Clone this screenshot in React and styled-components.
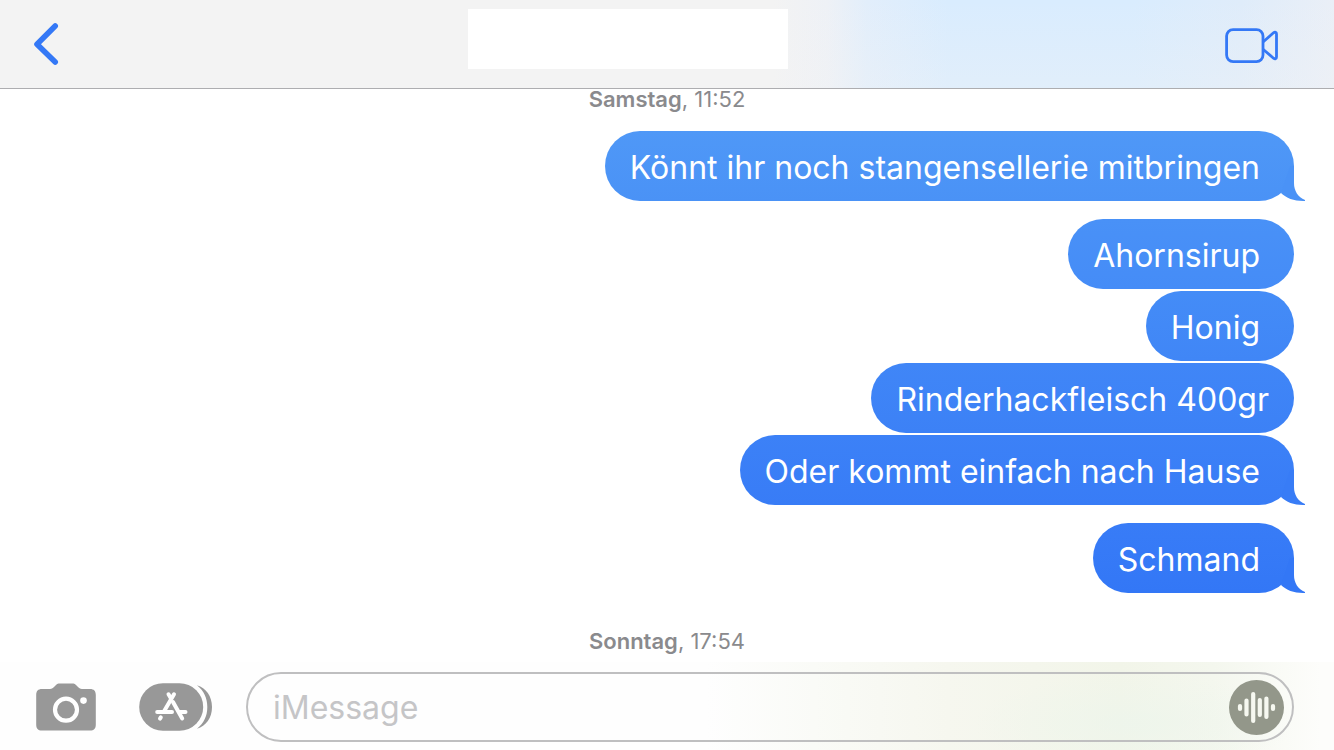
import React from "react";
import styled, { createGlobalStyle } from "styled-components";

const GlobalStyle = createGlobalStyle`
  * { box-sizing: border-box; }
  body { margin: 0; background: #fff; font-family: Inter, "Liberation Sans", sans-serif; }
  button { border: 0; padding: 0; background: none; display: flex; cursor: pointer; font: inherit; }
  svg { display: block; }
`;

const Screen = styled.div`
  min-height: 100vh;
  display: flex;
  flex-direction: column;
`;

const Header = styled.header`
  display: grid;
  grid-template-columns: 1fr auto 1fr;
  align-items: center;
  height: 89px;
  padding: 0 55px 0 32px;
  border-bottom: 1px solid #adadb0;
  background:
    linear-gradient(to bottom, rgba(243, 243, 243, 0) 0%, rgba(243, 243, 243, 0.3) 100%),
    linear-gradient(to right, #f3f3f3 0%, #f3f3f3 58%, #eef1f6 62%, #e2eefb 65%, #d9ecfe 71%, #d9ecfe 85%, #dfecfa 93%, #eaeff7 100%);
`;

const ContactName = styled.div`
  width: 320px;
  height: 60px;
  margin: 0 56px 10px 0;
  background: #fff;
`;

const CallButton = styled.button`
  justify-self: end;
`;

const Thread = styled.main`
  flex: 1;
  display: flex;
  flex-direction: column;
  padding: 0 40px;
`;

const Stamp = styled.time`
  align-self: center;
  font-size: 22px;
  line-height: 20px;
  color: #8a8a8d;
  margin-top: ${(p) => (p.$spaced ? 38 : 0)}px;
  b { font-weight: 600; }
`;

const Messages = styled.ul`
  display: flex;
  flex-direction: column;
  align-items: flex-end;
  list-style: none;
  margin: 22px 0 0;
  padding: 0;
`;

const Bubble = styled.li`
  position: relative;
  height: 70px;
  padding: 0 25px;
  margin-bottom: ${(p) => (p.$last ? 18 : 2)}px;
  border-radius: 35px;
  background: linear-gradient(${(p) => p.$from}, ${(p) => p.$to});
  color: #fff;
  font-size: 32px;
  line-height: 74px;
  white-space: pre;
  &:last-child { margin-bottom: 0; }
`;

const TailShape = styled.svg`
  position: absolute;
  right: -12px;
  bottom: 0;
`;

const Composer = styled.form`
  display: flex;
  align-items: center;
  height: 88px;
  padding: 2px 40px 0 36px;
  background:
    radial-gradient(ellipse 160px 50px at 85% 70%, rgba(236, 245, 236, 0.7), rgba(236, 245, 236, 0)),
    linear-gradient(to right, #fefefe 0%, #fefefe 53%, #fafbf7 61%, #f6f7ef 71%, #f2f5e9 84%, #f4f7ee 91%, #fdfdfb 99%);
`;

const AppsButton = styled.button`
  margin: 0 34px 0 43px;
`;

const Field = styled.div`
  flex: 1;
  display: flex;
  align-items: center;
  height: 70px;
  padding: 0 8px 0 25px;
  border: 2px solid #bfbfc0;
  border-radius: 35px;
`;

const TextInput = styled.input`
  flex: 1;
  min-width: 0;
  height: 60px;
  padding: 0;
  border: 0;
  outline: 0;
  background: none;
  font: inherit;
  font-size: 32px;
  color: #111;
  &::placeholder { color: #c5c5c7; opacity: 1; }
`;

const messages = [
  { text: "Könnt ihr noch stangensellerie mitbringen ", from: "#4f98f7", to: "#4a92f6", tail: true },
  { text: "Ahornsirup ", from: "#4991f7", to: "#458cf7" },
  { text: "Honig ", from: "#448cf7", to: "#4086f6" },
  { text: "Rinderhackfleisch 400gr", from: "#4086f7", to: "#3c81f6" },
  { text: "Oder kommt einfach nach Hause ", from: "#3c81f7", to: "#387cf6", tail: true },
  { text: "Schmand ", from: "#387cf7", to: "#3377f6", tail: true },
];

function Tail({ color }) {
  return (
    <TailShape width="36" height="36" viewBox="0 0 36 36" aria-hidden="true">
      <path d="M20 1H24V18C24 26 28 32 35 35V36H33C24 36 16 33 11 28Z" fill={color} />
    </TailShape>
  );
}

function BackIcon() {
  return (
    <svg width="30" height="46" viewBox="0 0 30 46" fill="none" stroke="#3478f6" strokeWidth="5.6" strokeLinecap="round" strokeLinejoin="round">
      <path d="M23.2 5L5 23.2L23.2 41" />
    </svg>
  );
}

function VideoIcon() {
  return (
    <svg width="54" height="40" viewBox="0 -4 54 40" fill="none" stroke="#3478f6" strokeWidth="2.8" strokeLinejoin="round">
      <rect x="1.6" y="1.6" width="36.4" height="32" rx="6.5" />
      <path d="M38 14L48.5 4.8C50 3.6 51.5 4.1 51.5 6V29C51.5 31 50 31.4 48.5 30.2L38 21.2" />
    </svg>
  );
}

function CameraIcon() {
  return (
    <svg width="60" height="48" viewBox="0 0 60 48">
      <path d="M6 6H14C16 6 17 5 18.5 3.5L20 2C21.3 .8 22 .4 24 .4H36C38 .4 38.7 .8 40 2L41.5 3.5C43 5 44 6 46 6H54C58 6 59.8 8 59.8 12V41.5C59.8 45.5 58 47.5 54 47.5H6C2 47.5 .2 45.5 .2 41.5V12C.2 8 2 6 6 6Z" fill="#989898" />
      <circle cx="30" cy="26.7" r="11" fill="none" stroke="#fff" strokeWidth="4.2" />
      <circle cx="47.5" cy="17.6" r="3.3" fill="#fff" />
    </svg>
  );
}

function AppsIcon() {
  return (
    <svg width="73" height="48" viewBox="0 0 73 48">
      <path d="M58 2.2C67 5 73 13 73 24C73 35 67 43 58 45.8C65 40 68.3 33 68.3 24C68.3 15 65 8 58 2.2Z" fill="#989898" />
      <rect x=".2" y=".2" width="64" height="47.5" rx="23.7" fill="#989898" />
      <g stroke="#fff" strokeWidth="4" strokeLinecap="round" fill="none">
        <path d="M35 11.3L24.8 28.8" />
        <path d="M29.5 11.3L32 15.5" />
        <path d="M34 19L43.2 35.5" />
        <path d="M18.2 29H33M40.5 29H46.5" />
        <path d="M21.8 34.4L21 35.6" />
      </g>
    </svg>
  );
}

function VoiceIcon() {
  return (
    <svg width="55" height="55" viewBox="0 0 55 55">
      <circle cx="27.5" cy="27.5" r="27.5" fill="#93978a" />
      <g stroke="#f6f8f0" strokeWidth="4.2" strokeLinecap="round">
        <path d="M11 26V29M17.5 20.5V34.5M24.2 14V41M30.8 20V35M37.4 18.5V37M44 26V29" />
      </g>
    </svg>
  );
}

export default function App() {
  return (
    <>
      <GlobalStyle />
      <Screen>
        <Header>
          <button type="button" aria-label="Zurück"><BackIcon /></button>
          <ContactName />
          <CallButton type="button" aria-label="Videoanruf"><VideoIcon /></CallButton>
        </Header>
        <Thread>
          <Stamp><b>Samstag</b>, 11:52</Stamp>
          <Messages>
            {messages.map((m) => (
              <Bubble key={m.text} $from={m.from} $to={m.to} $last={m.tail}>
                {m.tail && <Tail color={m.to} />}
                {m.text}
              </Bubble>
            ))}
          </Messages>
          <Stamp $spaced><b>Sonntag</b>, 17:54</Stamp>
        </Thread>
        <Composer onSubmit={(e) => e.preventDefault()}>
          <button type="button" aria-label="Kamera"><CameraIcon /></button>
          <AppsButton type="button" aria-label="Apps"><AppsIcon /></AppsButton>
          <Field>
            <TextInput type="text" aria-label="Nachricht" placeholder="iMessage" />
            <button type="button" aria-label="Sprachnachricht"><VoiceIcon /></button>
          </Field>
        </Composer>
      </Screen>
    </>
  );
}
